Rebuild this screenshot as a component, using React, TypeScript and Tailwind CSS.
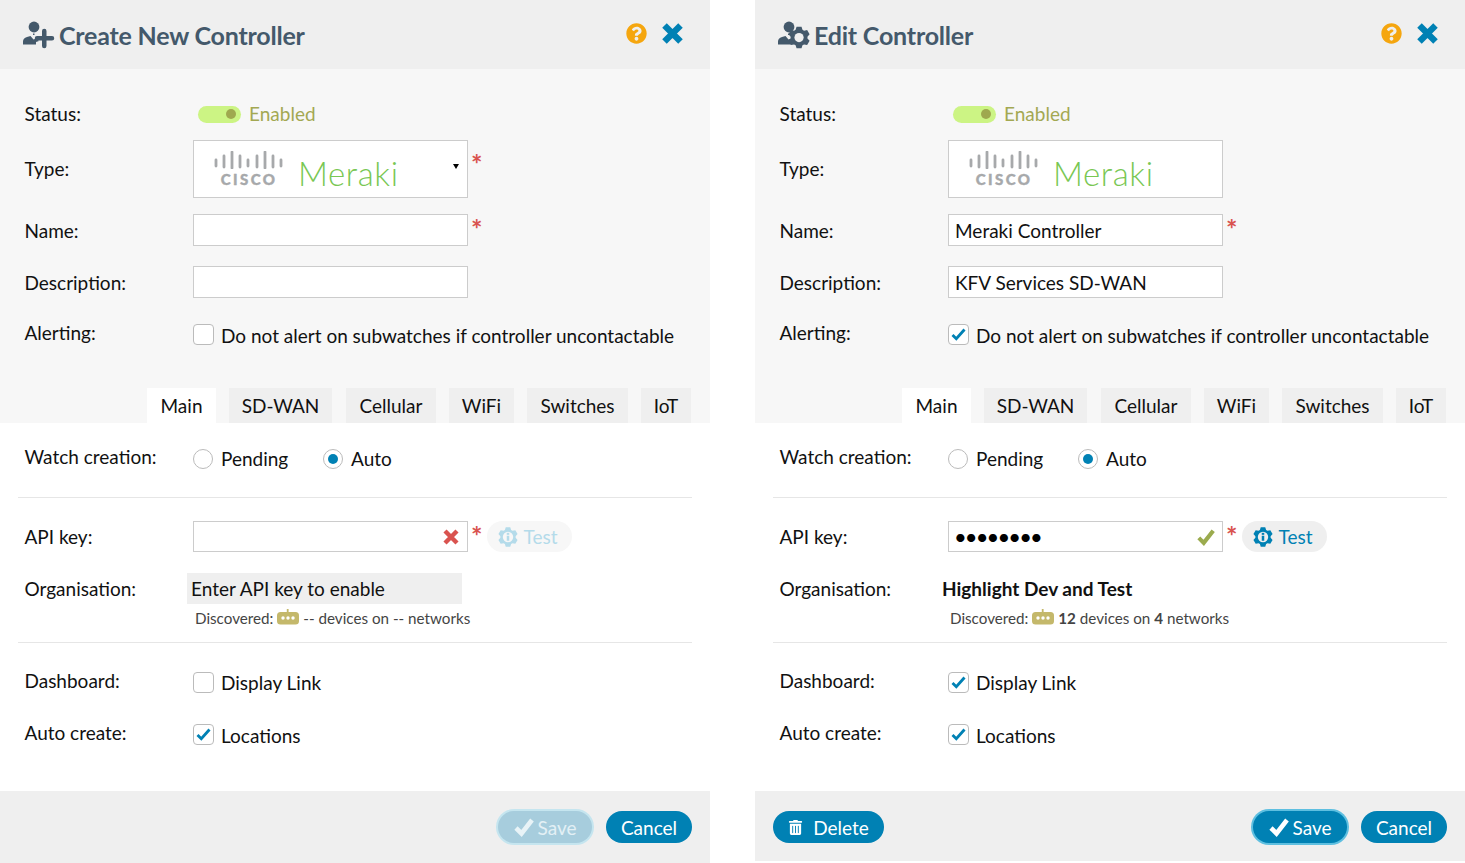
import { ReactNode } from 'react'
import { FaQuestionCircle, FaTrashAlt } from 'react-icons/fa'

// six toothed gear on a 24x24 box
const gearPoints = [0, 60, 120, 180, 240, 300]
  .flatMap((a) =>
    [
      [9.2, a - 24],
      [12, a - 13],
      [12, a + 13],
      [9.2, a + 24],
    ].map(([r, deg]) => {
      const rad = ((deg - 90) * Math.PI) / 180
      return `${(12 + r * Math.cos(rad)).toFixed(2)},${(12 + r * Math.sin(rad)).toFixed(2)}`
    }),
  )
  .join(' ')

function Row({ label, children, className, up = '' }: { label: string; children: ReactNode; className: string; up?: string }) {
  return (
    <div className={`flex items-center ${className}`}>
      <div className={`-ml-[0.5px] w-[168.5px] shrink-0 text-[19px] leading-none text-[#111] ${up}`}>{label}</div>
      {children}
    </div>
  )
}

function Star({ low }: { low?: boolean }) {
  return (
    <span className={`mb-auto ml-[3px] h-[20px] text-[27px] leading-[30px] font-bold text-[#d9534f] ${low ? 'mt-[9px]' : ''}`}>*</span>
  )
}

function CheckMark({ size, color }: { size: number; color: string }) {
  return (
    <svg width={size} height={size} viewBox="0 0 20 20" className="shrink-0">
      <path d="M2 11l5.500 5.500L18 3" fill="none" stroke={color} strokeWidth="4.600" />
    </svg>
  )
}

function Checkbox({ checked }: { checked?: boolean }) {
  return (
    <span className="flex h-[21px] w-[21px] shrink-0 items-center justify-center rounded-[4px] border border-[#bbb] bg-white">
      {checked && (
        <svg width="15" height="13" viewBox="0 0 15 13">
          <path d="M1.500 7l3.800 3.800L13.500 1.500" fill="none" stroke="#0081b4" strokeWidth="2.800" />
        </svg>
      )}
    </span>
  )
}

function CheckRow({ checked, text, textClass = '' }: { checked?: boolean; text: string; textClass?: string }) {
  return (
    <div className="flex items-center">
      <Checkbox checked={checked} />
      <span className={`ml-[7px] text-[19px] leading-none text-[#111] ${textClass}`}>{text}</span>
    </div>
  )
}

function Radio({ on, text, className }: { on?: boolean; text: string; className: string }) {
  return (
    <div className={`flex items-center ${className}`}>
      <span className="flex h-[20px] w-[20px] shrink-0 items-center justify-center rounded-full border border-[#bbb] bg-white">
        {on && <span className="h-[10px] w-[10px] rounded-full bg-[#0081b4]" />}
      </span>
      <span className="ml-[8px] pb-[2px] text-[19px] leading-none text-[#111]">{text}</span>
    </div>
  )
}

function CiscoMeraki() {
  const bars = [
    [215, 159, 165],
    [223, 155, 166],
    [231, 151, 167],
    [239, 155, 166],
    [247, 159, 165],
    [256, 155, 166],
    [264, 151, 167],
    [272, 155, 166],
    [280, 159, 165],
  ]
  return (
    <div className="flex items-center">
      <div className="ml-[20px] flex w-[70px] flex-col items-center">
        <svg width="70" height="18" viewBox="213 150 70 18">
          {bars.map(([x, y1, y2]) => (
            <line key={x} x1={x} x2={x} y1={y1} y2={y2} stroke="#a7a9ab" strokeWidth="2.800" strokeLinecap="round" />
          ))}
        </svg>
        <span className="mt-[2px] text-[15px] leading-[17px] font-black tracking-[2.400px] text-[#a7a9ab] [-webkit-text-stroke:0.4px_#a7a9ab]">CISCO</span>
      </div>
      <span className="mt-[8px] ml-[14px] text-[33px] leading-none font-light tracking-[0.600px] text-[#79c753]">Meraki</span>
    </div>
  )
}

function Tabs() {
  const tabs = [
    ['Main', 'w-[69px] bg-white'],
    ['SD-WAN', 'w-[103px] ml-[13px] bg-[#efefef]'],
    ['Cellular', 'w-[90px] ml-[14px] bg-[#efefef]'],
    ['WiFi', 'w-[65px] ml-[13px] bg-[#efefef]'],
    ['Switches', 'w-[101px] ml-[13px] bg-[#efefef]'],
    ['IoT', 'w-[50px] ml-[13px] bg-[#efefef]'],
  ]
  return (
    <div className="mt-auto ml-[147px] flex h-[35px]">
      {tabs.map(([name, cls]) => (
        <div key={name} className={`flex items-center justify-center text-[19px] leading-none text-[#111] ${cls}`}>
          {name}
        </div>
      ))}
    </div>
  )
}

function TitleIcon({ edit }: { edit?: boolean }) {
  return (
    <svg width="32" height="28" viewBox="0 0 32 28" className="shrink-0">
      <circle cx="11" cy="6" r="5.400" fill="#44596b" />
      <rect x="10" y="12.500" width="1.500" height="1.500" fill="#44596b" />
      <path d="M0 23.500v-3Q0 17 4 16L7.500 15 10.500 18.500 13 17.500l3 2.500-3 1v2.500z" fill="#44596b" />
      {edit ? (
        <g transform="translate(10 5.500) scale(0.92)">
          <polygon points={gearPoints} fill="#44596b" />
          <circle cx="12" cy="12" r="5" fill="#efefef" />
        </g>
      ) : (
        <path
          d="M19 10a2 2 0 0 1 4.500 0v5h5.500a2.250 2.250 0 0 1 0 4.500h-5.500V25a2.250 2.250 0 0 1-4.500 0v-5.500h-5a2.250 2.250 0 0 1 0-4.500h5z"
          fill="#44596b"
        />
      )}
    </svg>
  )
}

function RobotIcon() {
  return (
    <svg width="22" height="16" viewBox="0 0 22 16" className="mr-[4px] mb-[3px] ml-[4px] shrink-0">
      <rect x="9.800" y="0" width="1.800" height="4" fill="#c4b86b" />
      <rect x="0" y="3" width="22" height="12.500" rx="3.500" fill="#c4b86b" />
      <circle cx="6" cy="9" r="1.700" fill="#fff" />
      <circle cx="11" cy="9" r="1.700" fill="#fff" />
      <circle cx="16" cy="9" r="1.700" fill="#fff" />
    </svg>
  )
}

function GearInfo({ color, hole }: { color: string; hole: string }) {
  return (
    <svg width="20" height="20" viewBox="0 0 24 24" className="shrink-0">
      <polygon points={gearPoints} fill={color} />
      <circle cx="12" cy="12" r="6.200" fill={hole} />
      <rect x="10.500" y="10.500" width="3" height="6" fill={color} />
      <rect x="10.500" y="7" width="3" height="2.400" fill={color} />
    </svg>
  )
}

function Panel({ edit }: { edit?: boolean }) {
  return (
    <div className="flex w-[710px] shrink-0 flex-col">
      <header className="flex h-[69px] shrink-0 items-center bg-[#efefef] pr-[26px] pl-[23px]">
        <TitleIcon edit={edit} />
        <h1 className="ml-[4px] pt-[1px] text-[25px] leading-none font-bold tracking-[-0.200px] text-[#44596b]">
          {edit ? 'Edit Controller' : 'Create New Controller'}
        </h1>
        <FaQuestionCircle className="mb-[2px] ml-auto text-[21px] text-[#f5a60f]" />
        <svg width="23" height="23" viewBox="0 0 23 23" className="mb-[2px] ml-[14px]">
          <path d="M3.500 3.500l16 16M19.500 3.500l-16 16" stroke="#0081b4" strokeWidth="6.400" fill="none" />
        </svg>
      </header>

      <section className="flex h-[354px] shrink-0 flex-col bg-[#f7f7f7] pt-[36px] pl-[25px]">
        <Row label="Status:" up="pb-[2px]" className="h-[18px]">
          <span className="ml-[5px] flex h-[17px] w-[43px] items-center justify-end rounded-full bg-[#ccf484] pr-[5px]">
            <span className="h-[10px] w-[10px] rounded-full bg-[#9fa84f]" />
          </span>
          <span className="ml-[8px] pb-[2px] text-[19px] leading-none text-[#a3a852]">Enabled</span>
        </Row>
        <Row label="Type:" up="pb-[2px]" className="mt-[17px] h-[58px]">
          <div className="relative flex h-[58px] w-[275px] items-center border border-[#ccc] bg-white">
            <CiscoMeraki />
            {!edit && <span className="absolute top-[23px] right-[8px] h-0 w-0 border-x-[3px] border-t-[5px] border-x-transparent border-t-black" />}
          </div>
          {!edit && <Star low />}
        </Row>
        <Row label="Name:" className="mt-[16px] h-[32px]">
          <div className="flex h-[32px] w-[275px] items-center border border-[#ccc] bg-white pl-[6px] text-[19px] leading-none text-[#111]">
            {edit && 'Meraki Controller'}
          </div>
          <Star />
        </Row>
        <Row label="Description:" className="mt-[20px] h-[32px]">
          <div className="flex h-[32px] w-[275px] items-center border border-[#ccc] bg-white pl-[6px] text-[19px] leading-none text-[#111]">
            {edit && 'KFV Services SD-WAN'}
          </div>
        </Row>
        <Row label="Alerting:" up="pb-[4px]" className="mt-[26px] h-[21px]">
          <CheckRow checked={edit} textClass="pt-[2px]" text="Do not alert on subwatches if controller uncontactable" />
        </Row>
        <div className="mt-auto -ml-[25px]">
          <Tabs />
        </div>
      </section>

      <section className="flex h-[368px] shrink-0 flex-col bg-white">
        <Row label="Watch creation:" up="pb-[6px]" className="mt-[25px] h-[22px] pl-[25px]">
          <Radio text="Pending" className="w-[130px]" />
          <Radio on text="Auto" className="" />
        </Row>
        <hr className="mx-[18px] mt-[27px] border-[#e6e6e6]" />
        <Row label="API key:" className="mt-[23px] h-[31px] pl-[25px]">
          <div className="flex h-[31px] w-[275px] items-center border border-[#ccc] bg-white pr-[7px] pl-[5px]">
            {edit && <span className="text-[22px] leading-none tracking-[-1.900px] text-black">••••••••</span>}
            {edit ? (
              <span className="ml-auto">
                <CheckMark size={18} color="#9bab4e" />
              </span>
            ) : (
              <svg width="16" height="16" viewBox="0 0 16 16" className="mr-[1px] ml-auto">
                <path d="M2 2l12 12M14 2L2 14" stroke="#d9534f" strokeWidth="4.400" fill="none" />
              </svg>
            )}
          </div>
          <Star />
          <div className={`ml-[5px] flex h-[31px] w-[85px] items-center gap-[5px] rounded-full pl-[11px] text-[19px] leading-none ${edit ? 'bg-[#efefef] text-[#0081b4]' : 'bg-[#f7f7f7] text-[#b4dbea]'}`}>
            <GearInfo color={edit ? '#0081b4' : '#b4dbea'} hole={edit ? '#efefef' : '#f7f7f7'} />
            Test
          </div>
        </Row>
        <Row label="Organisation:" className="mt-[21px] h-[31px] pl-[25px]">
          <div className={`-ml-[6px] flex h-[31px] w-[275px] items-center text-[19px] leading-none text-[#111] ${edit ? 'font-bold' : 'bg-[#efefef] pl-[4px]'}`}>
            {edit ? 'Highlight Dev and Test' : 'Enter API key to enable'}
          </div>
        </Row>
        <div className="mt-[6px] ml-[195px] flex h-[17px] items-center text-[15.200px] leading-none text-[#444]">
          Discovered:
          <RobotIcon />
          <span>
            {edit ? <b>12</b> : '--'} devices on {edit ? <b>4</b> : '--'} networks
          </span>
        </div>
        <hr className="mx-[18px] mt-[15px] border-[#e6e6e6]" />
        <Row label="Dashboard:" up="pb-[4px]" className="mt-[29px] h-[21px] pl-[25px]">
          <CheckRow checked={edit} text="Display Link" />
        </Row>
        <Row label="Auto create:" up="pb-[4px]" className="mt-[31px] h-[21px] pl-[25px]">
          <CheckRow checked textClass="pt-[2px]" text="Locations" />
        </Row>
      </section>

      <footer className={`flex shrink-0 items-start bg-[#efefef] px-[18px] pt-[20px] ${edit ? 'h-[70px]' : 'h-[72px]'}`}>
        {edit && (
          <button className="flex h-[32px] w-[111px] items-center justify-center gap-[10px] rounded-full bg-[#0081b4] text-[19px] leading-none text-white">
            <FaTrashAlt className="text-[15px]" />
            Delete
          </button>
        )}
        <button className={`ml-auto flex h-[32px] w-[94px] items-center justify-center gap-[4px] rounded-full text-[19px] leading-none ${edit ? 'bg-[#0081b4] text-white ring-2 ring-[#5ebfe0]' : 'bg-[#a7cddd] text-[#e3f0f5] ring-2 ring-[#c5e5ef]'}`}>
          <CheckMark size={20} color={edit ? '#fff' : '#e8f3f7'} />
          Save
        </button>
        <button className="ml-[14px] flex h-[32px] w-[86px] items-center justify-center rounded-full bg-[#0081b4] text-[19px] leading-none text-white">
          Cancel
        </button>
      </footer>
    </div>
  )
}

export default function App() {
  return (
    <div className="flex h-[863px] w-[1465px] items-start gap-[45px] overflow-hidden bg-white font-['Lato','Open_Sans',sans-serif]">
      <Panel />
      <Panel edit />
    </div>
  )
}
